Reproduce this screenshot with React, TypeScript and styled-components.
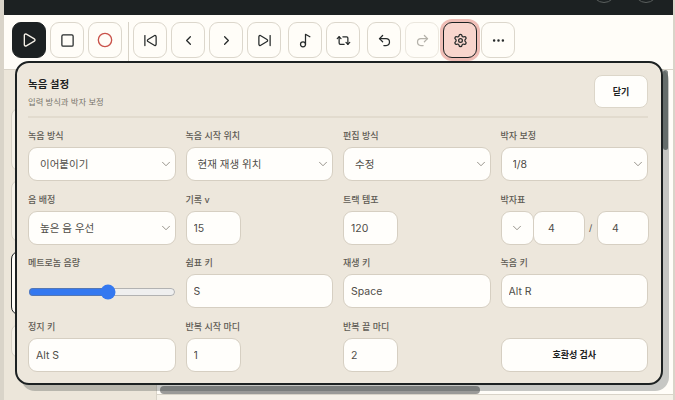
import React from "react";
import styled, { createGlobalStyle, css } from "styled-components";
import {
  Play, Square, Circle, SkipBack, ChevronLeft, ChevronRight, SkipForward,
  Music2, Repeat2, Undo2, Redo2, Settings, Ellipsis, ChevronDown,
} from "lucide-react";

const FONT = `Inter, "Noto Sans CJK KR", sans-serif`;

const Global = createGlobalStyle`
  html, body { margin: 0; padding: 0; }
  body { font-family: ${FONT}; background: #d9d4c9; }
  * { box-sizing: border-box; }
`;

const Page = styled.div`
  position: relative;
  width: 675px;
  height: 400px;
  overflow: hidden;
  padding: 0 2px 0 4px;
  background: #d9d4c9;
  display: flex;
  flex-direction: column;
`;
const TopBar = styled.header`
  height: 15px;
  flex: none;
  background: #1c2122;
  display: flex;
  justify-content: flex-end;
  align-items: flex-end;
  gap: 18px;
  padding-right: 15px;
  overflow: hidden;
`;
const TopCircle = styled.span`
  width: 24px;
  height: 24px;
  flex: none;
  margin-bottom: 12px;
  border: 1px solid #5a5f5e;
  border-radius: 50%;
`;
const Toolbar = styled.div`
  height: 55px;
  flex: none;
  background: #fffdf8;
  border-bottom: 1px solid #d8d3c8;
  display: flex;
  align-items: flex-start;
  padding: 7px 0 0 8px;
  gap: 4px;
`;
const ToolButton = styled.button<{ $dark?: boolean; $active?: boolean; $off?: boolean; $gapBefore?: boolean }>`
  width: 34px;
  height: 36px;
  flex: none;
  padding: 0;
  border-radius: 9px;
  border: 1px solid #dcd7cc;
  background: #fffdf8;
  color: #262a2a;
  display: flex;
  align-items: center;
  justify-content: center;
  ${(p) => p.$gapBefore && css`margin-left: 3px;`}
  ${(p) => p.$dark && css`background: #1c2122; border-color: #1c2122; color: #f5f1e8;`}
  ${(p) => p.$off && css`color: #b5b2aa; border-color: #ebe7de;`}
  ${(p) => p.$active && css`
    background: #f8d5cd;
    border-color: #1c2122;
    box-shadow: 0 0 0 3px #efbdb6;
  `}
`;
const ToolDivider = styled.span`
  width: 1px;
  height: 40px;
  flex: none;
  margin: 0 0 0 2px;
  background: #d8d3c8;
`;
const Body = styled.div`
  flex: 1;
  display: flex;
  min-height: 0;
`;
const Sidebar = styled.aside`
  width: 153px;
  flex: none;
  background: #ece6da;
  border-right: 1px solid #d8d3c8;
  padding: 38px 0 0 7px;
  display: flex;
  flex-direction: column;
  gap: 9px;
`;
const SideCard = styled.div<{ $on?: boolean; $h: number }>`
  height: ${(p) => p.$h}px;
  border-radius: 8px;
  background: ${(p) => (p.$on ? "#fffdf8" : "#f5f1e8")};
  border: ${(p) => (p.$on ? "1px solid #1c2122" : "1px solid #d8d3c8")};
`;
const Main = styled.main`
  flex: 1;
  background: #fffdf8;
  position: relative;
`;
const HThumb = styled.span`
  position: absolute;
  left: 3px;
  top: 316px;
  width: 320px;
  height: 8px;
  border-radius: 4px;
  background: #9a9a98;
`;
const VThumb = styled.span`
  position: absolute;
  right: 5px;
  top: 0;
  width: 5px;
  height: 80px;
  background: #7e8482;
  border-radius: 3px;
`;
const Strip = styled.span`
  position: absolute;
  left: 0;
  right: 0;
  top: 324px;
  height: 7px;
  background: #f5f1e8;
  border-top: 1px solid #d8d3c8;
`;
const Modal = styled.section`
  position: absolute;
  left: 15px;
  top: 61px;
  width: 648px;
  height: 324px;
  padding: 12px 13px 0 11px;
  background: #ede7dc;
  border: 2px solid #1c2122;
  border-radius: 14px;
  box-shadow: 6px 6px 0 rgba(28, 40, 40, 0.25);
`;
const ModalHead = styled.div`
  display: flex;
  justify-content: space-between;
  align-items: flex-start;
  height: 43px;
  border-bottom: 2px solid #e2dbce;
`;
const Title = styled.h2`
  margin: 3px 0 0;
  font-size: 10.5px;
  line-height: 14px;
  font-weight: 700;
  color: #1c2122;
`;
const Subtitle = styled.p`
  margin: 4px 0 0;
  font-size: 8.3px;
  line-height: 12px;
  color: #77736a;
`;
const CloseButton = styled.button`
  width: 54px;
  height: 33px;
  border: 1px solid #dcd6c9;
  border-radius: 8px;
  background: #fffefb;
  font-family: ${FONT};
  font-size: 9px;
  font-weight: 700;
  color: #1c2122;
`;
const Grid = styled.div`
  display: grid;
  grid-template-columns: repeat(4, 1fr);
  column-gap: 10px;
  row-gap: 11.6px;
  margin-top: 11px;
`;
const Field = styled.label`
  display: flex;
  flex-direction: column;
  gap: 4px;
  min-width: 0;
`;
const FieldLabel = styled.span`
  font-size: 9px;
  line-height: 14px;
  font-weight: 500;
  color: #5e5b54;
`;
const controlBase = css`
  height: 34px;
  border: 1px solid #d6cfc2;
  border-radius: 9px;
  background: #fffefb;
  font-family: ${FONT};
  font-size: 10.5px;
  color: #4f4d48;
  outline: none;
`;
const SelectWrap = styled.div<{ $narrow?: boolean }>`
  position: relative;
  width: ${(p) => (p.$narrow ? "24px" : "100%")};
  flex: none;
  color: #77736a;
  svg { position: absolute; right: ${(p) => (p.$narrow ? "1px" : "3px")}; top: 10px; pointer-events: none; }
`;
const Select = styled.select`
  ${controlBase}
  display: block;
  width: 100%;
  padding: 1px 20px 0 11px;
  appearance: none;
`;
const Input = styled.input<{ $short?: boolean }>`
  ${controlBase}
  display: block;
  width: ${(p) => (p.$short ? "55px" : "100%")};
  padding: 1px 7px 0;
`;
const MeterRow = styled.div`
  display: flex;
  align-items: center;
`;
const MeterInput = styled.input<{ $first?: boolean }>`
  ${controlBase}
  width: 52px;
  flex: none;
  margin-left: ${(p) => (p.$first ? "8px" : "0")};
  padding: 1px 14px 0 0;
  text-align: center;
`;
const Slash = styled.span`
  width: 12px;
  flex: none;
  text-align: center;
  font-size: 9px;
  color: #4f4d48;
`;
const SliderBox = styled.div`
  height: 34px;
  padding-top: 1px;
  display: flex;
  align-items: center;
`;
const Slider = styled.input`
  width: 100%;
  margin: 0;
  accent-color: #3478f0;
`;
const WideAction = styled.button`
  ${controlBase}
  width: 100%;
  margin-top: 18px;
  font-size: 9px;
  font-weight: 700;
  color: #1c2122;
`;

const noop = () => {};
const Sel = ({ value, narrow }: { value?: string; narrow?: boolean }) => (
  <SelectWrap $narrow={narrow}>
    <Select value={value ?? ""} onChange={noop}>
      <option value={value ?? ""}>{value ?? ""}</option>
    </Select>
    <ChevronDown size={14} strokeWidth={1.3} />
  </SelectWrap>
);
const Txt = ({ value, short }: { value: string; short?: boolean }) => (
  <Input $short={short} value={value} readOnly />
);
const icon = { size: 15, strokeWidth: 2 } as const;

export default function App() {
  return (
    <Page>
      <Global />
      <TopBar>
        <TopCircle />
        <TopCircle />
      </TopBar>
      <Toolbar>
        <ToolButton $dark aria-label="재생"><Play {...icon} size={16} /></ToolButton>
        <ToolButton aria-label="정지"><Square {...icon} /></ToolButton>
        <ToolButton aria-label="녹음"><Circle {...icon} size={16} color="#c9524a" /></ToolButton>
        <ToolDivider />
        <ToolButton aria-label="처음"><SkipBack {...icon} /></ToolButton>
        <ToolButton aria-label="이전"><ChevronLeft {...icon} /></ToolButton>
        <ToolButton aria-label="다음"><ChevronRight {...icon} /></ToolButton>
        <ToolButton aria-label="끝"><SkipForward {...icon} /></ToolButton>
        <ToolButton $gapBefore aria-label="메트로놈"><Music2 {...icon} /></ToolButton>
        <ToolButton aria-label="반복"><Repeat2 {...icon} /></ToolButton>
        <ToolButton $gapBefore aria-label="실행 취소"><Undo2 {...icon} /></ToolButton>
        <ToolButton $off aria-label="다시 실행"><Redo2 {...icon} /></ToolButton>
        <ToolButton $active aria-label="설정"><Settings {...icon} /></ToolButton>
        <ToolButton aria-label="더보기"><Ellipsis {...icon} /></ToolButton>
      </Toolbar>
      <Body>
        <Sidebar>
          <SideCard $h={63} />
          <SideCard $h={62} />
          <SideCard $h={64} $on />
          <SideCard $h={34} />
        </Sidebar>
        <Main>
          <VThumb />
          <Strip />
          <HThumb />
        </Main>
      </Body>
      <Modal>
        <ModalHead>
          <div>
            <Title>녹음 설정</Title>
            <Subtitle>입력 방식과 박자 보정</Subtitle>
          </div>
          <CloseButton>닫기</CloseButton>
        </ModalHead>
        <Grid>
          <Field><FieldLabel>녹음 방식</FieldLabel><Sel value="이어붙이기" /></Field>
          <Field><FieldLabel>녹음 시작 위치</FieldLabel><Sel value="현재 재생 위치" /></Field>
          <Field><FieldLabel>편집 방식</FieldLabel><Sel value="수정" /></Field>
          <Field><FieldLabel>박자 보정</FieldLabel><Sel value="1/8" /></Field>

          <Field><FieldLabel>음 배정</FieldLabel><Sel value="높은 음 우선" /></Field>
          <Field><FieldLabel>기록 v</FieldLabel><Txt value="15" short /></Field>
          <Field><FieldLabel>트랙 템포</FieldLabel><Txt value="120" short /></Field>
          <Field>
            <FieldLabel>박자표</FieldLabel>
            <MeterRow>
              <Sel narrow />
              <MeterInput $first value="4" readOnly />
              <Slash>/</Slash>
              <MeterInput value="4" readOnly />
            </MeterRow>
          </Field>

          <Field>
            <FieldLabel>메트로놈 음량</FieldLabel>
            <SliderBox><Slider type="range" min={0} max={100} defaultValue={55} /></SliderBox>
          </Field>
          <Field><FieldLabel>쉼표 키</FieldLabel><Txt value="S" /></Field>
          <Field><FieldLabel>재생 키</FieldLabel><Txt value="Space" /></Field>
          <Field><FieldLabel>녹음 키</FieldLabel><Txt value="Alt R" /></Field>

          <Field><FieldLabel>정지 키</FieldLabel><Txt value="Alt S" /></Field>
          <Field><FieldLabel>반복 시작 마디</FieldLabel><Txt value="1" short /></Field>
          <Field><FieldLabel>반복 끝 마디</FieldLabel><Txt value="2" short /></Field>
          <WideAction>호환성 검사</WideAction>
        </Grid>
      </Modal>
    </Page>
  );
}
